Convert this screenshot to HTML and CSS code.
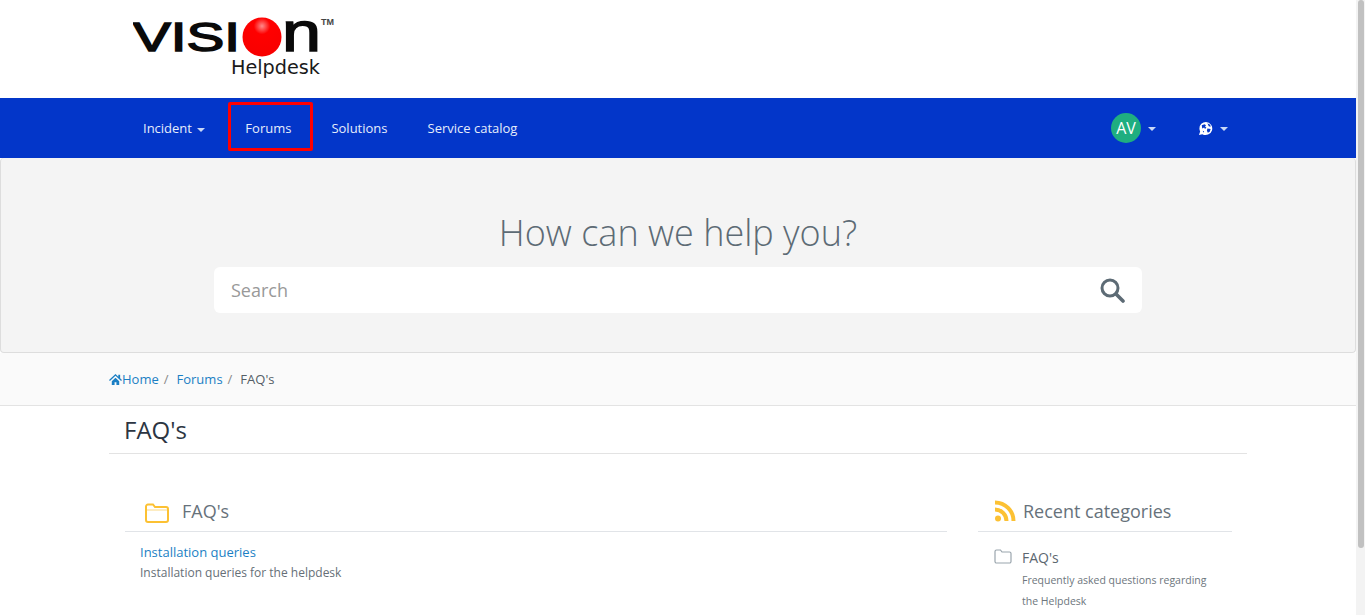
FILE: index.html
```html
<!DOCTYPE html>
<html lang="en">
<head>
  <meta charset="UTF-8" />
  <title>FAQ's</title>
  <link rel="stylesheet" href="styles.css">
</head>
<body>
  <div class="page">
    <header class="logo-bar">
      <svg class="logo" width="210" height="98" viewBox="0 0 210 98">
        <defs>
          <radialGradient id="ball" cx="50%" cy="22%" r="75%">
            <stop offset="0" stop-color="#ff8a8a"/>
            <stop offset="0.28" stop-color="#ff0000"/>
            <stop offset="1" stop-color="#f80000"/>
          </radialGradient>
        </defs>
        <text class="logo-word" x="0" y="51" textLength="107" lengthAdjust="spacingAndGlyphs">VISI</text>
        <circle cx="129" cy="37" r="19.5" fill="url(#ball)"/>
        <text class="logo-word logo-n" x="149" y="51" textLength="39" lengthAdjust="spacingAndGlyphs">n</text>
        <text class="logo-tm" x="188" y="25" textLength="13" lengthAdjust="spacingAndGlyphs">TM</text>
        <text class="logo-sub" x="98" y="74" textLength="89" lengthAdjust="spacingAndGlyphs">Helpdesk</text>
      </svg>
    </header>

    <nav class="navbar">
      <ul class="nav-list">
        <li class="nav-item">Incident <span class="caret"></span></li>
        <li class="nav-item nav-marked">Forums</li>
        <li class="nav-item">Solutions</li>
        <li class="nav-item">Service catalog</li>
      </ul>
      <div class="nav-right">
        <div class="nav-user"><span class="avatar">AV</span><span class="caret"></span></div>
        <div class="nav-lang">
          <svg width="15" height="15" viewBox="0 0 16 16">
            <path fill="#fff" d="M8.500 1a7 7 0 0 0-7 7c0 1.200.3 2.300.8 3.200L1 15l3.600-1A7 7 0 1 0 8.500 1z"/>
            <path fill="#0336c9" d="M4 4.500l3-1 1.500 1-1 1.500 1.500 1-1.500 1.500-1-1.500L4.500 8zM10 2.500l3 1.500.5 2-2-.5zM10 8l3.500.5-1 3-2 1-1-2zM5 10.500l1.500.5-.5 1.500z"/>
          </svg>
          <span class="caret"></span>
        </div>
      </div>
    </nav>

    <section class="hero">
      <h1 class="hero-title">How can we help you?</h1>
      <div class="search-box">
        <span class="search-placeholder">Search</span>
        <svg width="26" height="26" viewBox="0 0 26 26" fill="none" stroke="#5d6b75">
          <circle cx="11" cy="11" r="8" stroke-width="3"/>
          <path d="M17 17l7 7" stroke-width="3.600" stroke-linecap="round"/>
        </svg>
      </div>
    </section>

    <div class="breadcrumb-bar">
      <div class="container breadcrumb">
        <svg class="home-icon" width="13" height="13" viewBox="0 0 14 14" fill="#1b7fc4">
          <path d="M7 1L0 7.500l1 1 6-5.500 6 5.500 1-1-2-1.900V2h-2v2zM3 9v4h3V10h2v3h3V9L7 5.200z"/>
        </svg>
        <a class="crumb-link" href="#">Home</a><span class="crumb-sep">/</span>
        <a class="crumb-link" href="#">Forums</a><span class="crumb-sep">/</span>
        <span class="crumb-current">FAQ's</span>
      </div>
    </div>

    <main class="container">
      <h2 class="page-title">FAQ's</h2>

      <div class="columns">
        <section class="main-col">
          <h3 class="section-head">
            <svg class="head-folder" width="24" height="20" viewBox="0 0 24 20" fill="none" stroke="#fcc133" stroke-width="2">
              <path d="M1 3.500a2 2 0 0 1 2-2h5l2 2.500h11a2 2 0 0 1 2 2V17a2 2 0 0 1-2 2H3a2 2 0 0 1-2-2z"/>
              <path d="M2 7h20" stroke-width="1.500" stroke="#fde6ad"/>
            </svg>
            FAQ's
          </h3>
          <div class="forum-row">
            <a class="forum-link" href="#">Installation queries</a>
            <p class="forum-desc">Installation queries for the helpdesk</p>
          </div>
        </section>

        <aside class="side-col">
          <h3 class="section-head side-head">
            <svg width="22" height="22" viewBox="0 0 22 22" fill="none" stroke="#fcc133" stroke-width="4">
              <circle cx="4" cy="18.500" r="3" fill="#fcc133" stroke="none"/>
              <path d="M1 9.500a11.500 11.500 0 0 1 11.500 11.500"/>
              <path d="M1 2.500a18.500 18.500 0 0 1 18.500 18.500"/>
            </svg>
            Recent categories
          </h3>
          <div class="recent-row">
            <svg class="recent-folder" width="18" height="15" viewBox="0 0 18 15" fill="none" stroke="#9aa5ad" stroke-width="1.200">
              <path d="M1 2.500a1.500 1.500 0 0 1 1.500-1.500h4l1.500 2h7.500A1.500 1.500 0 0 1 17 4.500v8a1.500 1.500 0 0 1-1.500 1.500h-13A1.500 1.500 0 0 1 1 12.500z"/>
            </svg>
            <div>
              <div class="recent-name">FAQ's</div>
              <p class="recent-desc">Frequently asked questions regarding the Helpdesk</p>
            </div>
          </div>
        </aside>
      </div>
    </main>
  </div>

  <div class="scrollbar"><div class="scrollbar-thumb"></div></div>
</body>
</html>
```

FILE: styles.css
```css
body {
  font-family: 'Open Sans', sans-serif;
  margin: 0;
  padding: 0;
  background-color: #fff;
  color: #3c4650;
  height: 100vh;
  overflow: hidden;
  display: flex;
}

a {
  text-decoration: none;
}

.page {
  flex: 1;
  min-width: 0;
  overflow: hidden;
}

.scrollbar {
  width: 9px;
  flex: none;
  background-color: #f3f3f3;
}

.scrollbar-thumb {
  height: 548px;
  margin: 0 1px 0 2px;
  background-color: #c1c1c1;
  border-radius: 3px;
}

.logo-bar {
  height: 98px;
  padding-left: 133px;
  box-sizing: border-box;
}

.logo {
  display: block;
}

.logo-word {
  font-family: 'Liberation Sans', sans-serif;
  font-size: 40px;
  fill: #0a0a0a;
  stroke: #0a0a0a;
  stroke-width: 1.500px;
}

.logo-n {
  font-size: 55px;
}

.logo-tm {
  font-family: 'Liberation Sans', sans-serif;
  font-size: 9px;
  font-weight: bold;
  fill: #444;
}

.logo-sub {
  font-family: 'DejaVu Sans', sans-serif;
  font-size: 19px;
  fill: #1a1a1a;
}

.navbar {
  height: 60px;
  background-color: #0336c9;
  display: flex;
  justify-content: space-between;
  align-items: center;
  padding: 0 128px 0 123px;
}

.nav-list {
  display: flex;
  list-style: none;
  margin: 0;
  padding: 0;
}

.nav-item {
  color: #e6edfb;
  font-size: 13px;
  padding: 0 20px;
  height: 49px;
  line-height: 49px;
  box-sizing: border-box;
}

.nav-marked {
  border: 3px solid #f00;
  border-radius: 2px;
  line-height: 41px;
  padding: 3px 19px 0 14px;
  margin: -2px -2px 0 3px;
}

.caret {
  display: inline-block;
  width: 0;
  height: 0;
  margin: 2px 0 0 2px;
  vertical-align: middle;
  border-top: 4px solid #c9d8f7;
  border-left: 4px solid transparent;
  border-right: 4px solid transparent;
}

.nav-right {
  display: flex;
  align-items: center;
  gap: 42px;
}

.nav-user,
.nav-lang {
  display: flex;
  align-items: center;
  gap: 5px;
}

.avatar {
  width: 30px;
  height: 30px;
  border-radius: 50%;
  background-color: #1fae80;
  color: #fff;
  font-size: 16px;
  line-height: 30px;
  text-align: center;
}

.hero {
  height: 195px;
  box-sizing: border-box;
  background-color: #f4f4f4;
  border: 1px solid #ddd;
  border-top: none;
  border-radius: 4px;
  padding-top: 52px;
  text-align: center;
}

.hero-title {
  margin: 0;
  font-size: 36px;
  font-weight: 300;
  line-height: 46px;
  color: #5d6b75;
}

.search-box {
  width: 928px;
  height: 46px;
  margin: 11px auto 0;
  padding: 0 17px;
  box-sizing: border-box;
  background-color: #fff;
  border-radius: 6px;
  display: flex;
  justify-content: space-between;
  align-items: center;
}

.search-placeholder {
  font-size: 18px;
  color: #999;
}

.breadcrumb-bar {
  height: 53px;
  box-sizing: border-box;
  background-color: #fafafa;
  border-bottom: 1px solid #e3e3e3;
}

.container {
  width: 1138px;
  margin: 0 auto;
}

.breadcrumb {
  display: flex;
  align-items: center;
  height: 52px;
  font-size: 13px;
}

.crumb-link {
  color: #1b7fc4;
}

.crumb-sep {
  color: #888;
  margin: 0 8px 0 5px;
}

.crumb-current {
  color: #555e66;
}

.page-title {
  margin: 0;
  height: 48px;
  padding-left: 15px;
  font-size: 24px;
  font-weight: 400;
  line-height: 47px;
  color: #2c3542;
  border-bottom: 1px solid #e3e3e3;
  box-sizing: border-box;
}

.columns {
  display: flex;
  justify-content: space-between;
  padding: 0 15px 0 16px;
  margin-top: 44px;
}

.main-col {
  width: 822px;
}

.side-col {
  width: 254px;
}

.section-head {
  margin: 0;
  height: 34px;
  box-sizing: border-box;
  display: flex;
  align-items: center;
  font-size: 18px;
  font-weight: 400;
  line-height: 26px;
  color: #67727b;
  border-bottom: 1px solid #e1e4e8;
  padding: 0 0 7px 20px;
}

.head-folder {
  margin: 4px 13px 0 0;
}

.side-head {
  padding-left: 16px;
  gap: 7px;
}

.forum-row {
  padding: 10px 15px;
}

.forum-link {
  display: block;
  font-size: 13px;
  line-height: 20px;
  color: #1b7fc4;
}

.forum-desc {
  margin: 1px 0 0;
  font-size: 12px;
  line-height: 20px;
  color: #666f77;
}

.recent-row {
  display: flex;
  gap: 10px;
  padding: 16px 16px 0;
}

.recent-folder {
  margin-top: 1px;
  flex: none;
}

.recent-name {
  font-size: 14px;
  line-height: 20px;
  color: #5c6770;
}

.recent-desc {
  margin: 2px 0 0;
  width: 200px;
  font-size: 10.500px;
  line-height: 21px;
  color: #6d767d;
}
```
